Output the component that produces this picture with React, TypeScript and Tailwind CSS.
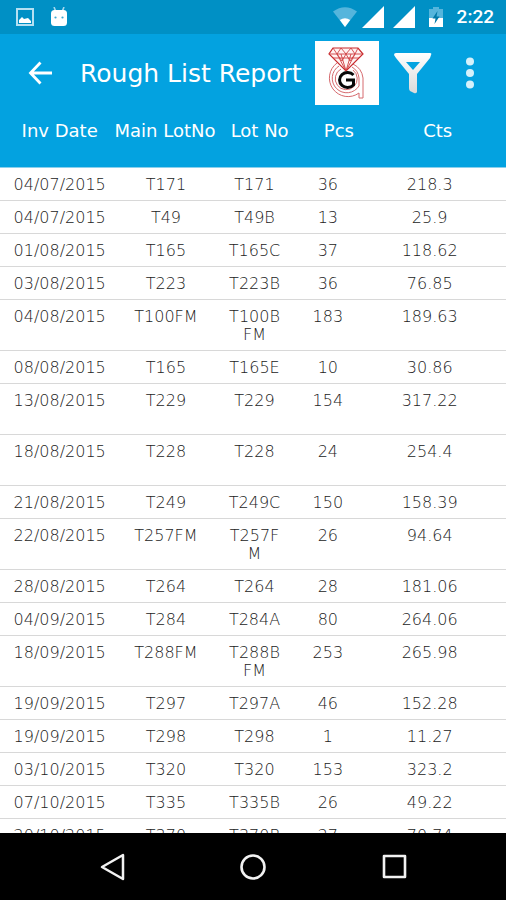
type Row = { date: string; main: string; lot: string[]; pcs: string; cts: string };

const rows: Row[] = [
  { date: "04/07/2015", main: "T171", lot: ["T171"], pcs: "36", cts: "218.3" },
  { date: "04/07/2015", main: "T49", lot: ["T49B"], pcs: "13", cts: "25.9" },
  { date: "01/08/2015", main: "T165", lot: ["T165C"], pcs: "37", cts: "118.62" },
  { date: "03/08/2015", main: "T223", lot: ["T223B"], pcs: "36", cts: "76.85" },
  { date: "04/08/2015", main: "T100FM", lot: ["T100B", "FM"], pcs: "183", cts: "189.63" },
  { date: "08/08/2015", main: "T165", lot: ["T165E"], pcs: "10", cts: "30.86" },
  { date: "13/08/2015", main: "T229", lot: ["T229", "\u00a0"], pcs: "154", cts: "317.22" },
  { date: "18/08/2015", main: "T228", lot: ["T228", "\u00a0"], pcs: "24", cts: "254.4" },
  { date: "21/08/2015", main: "T249", lot: ["T249C"], pcs: "150", cts: "158.39" },
  { date: "22/08/2015", main: "T257FM", lot: ["T257F", "M"], pcs: "26", cts: "94.64" },
  { date: "28/08/2015", main: "T264", lot: ["T264"], pcs: "28", cts: "181.06" },
  { date: "04/09/2015", main: "T284", lot: ["T284A"], pcs: "80", cts: "264.06" },
  { date: "18/09/2015", main: "T288FM", lot: ["T288B", "FM"], pcs: "253", cts: "265.98" },
  { date: "19/09/2015", main: "T297", lot: ["T297A"], pcs: "46", cts: "152.28" },
  { date: "19/09/2015", main: "T298", lot: ["T298"], pcs: "1", cts: "11.27" },
  { date: "03/10/2015", main: "T320", lot: ["T320"], pcs: "153", cts: "323.2" },
  { date: "07/10/2015", main: "T335", lot: ["T335B"], pcs: "26", cts: "49.22" },
  { date: "20/10/2015", main: "T370", lot: ["T370B"], pcs: "27", cts: "70.74" },
];

function Signal() {
  return (
    <svg width="22" height="22" viewBox="0 0 22 22" aria-hidden="true">
      <path d="M22 0V22H0Z" fill="#fff" />
    </svg>
  );
}

function StatusBar() {
  return (
    <div className="flex h-[34px] shrink-0 items-center justify-between bg-[#0090c5] pl-4 pr-3">
      <div className="flex items-center gap-4">
        <svg width="18" height="18" viewBox="0 0 18 18" aria-hidden="true">
          <rect x="1" y="1" width="16" height="16" fill="none" stroke="#b5e0f2" strokeWidth="2" />
          <path d="M3 15V12L6 9L8 11L12 10L15 13V15Z" fill="#fff" />
        </svg>
        <svg width="18" height="20" viewBox="0 0 18 20" aria-hidden="true">
          <path d="M4 0L6 5M14 0L12 5" stroke="#a5d8ee" strokeWidth="1.6" />
          <rect x="1" y="3" width="16" height="16" rx="3.5" fill="#fff" />
          <circle cx="5.500" cy="10.500" r="1.100" fill="#3aa8d2" />
          <circle cx="12.500" cy="10.500" r="1.100" fill="#3aa8d2" />
        </svg>
      </div>
      <div className="flex items-center">
        <svg className="mr-[5px]" width="24" height="20" viewBox="0 0 24 20" aria-hidden="true">
          <path d="M0 4.500Q12-4 24 4.500L12 20Z" fill="#55b5dc" />
          <path d="M6.800 13Q12 9.500 17.200 13L12 20Z" fill="#fff" />
        </svg>
        <div className="flex gap-[9px]">
          <Signal />
          <Signal />
        </div>
        <svg className="ml-[14px] mr-[14px]" width="14" height="20" viewBox="0 0 14 20" aria-hidden="true">
          <path d="M4 0H10V2H14V11H0V2H4Z" fill="#55b5dc" />
          <path d="M0 11H14V20H0Z" fill="#fff" />
          <path d="M8.500 4L3.500 11.500H6.500L5.500 17L10.500 9.500H7.500Z" fill="#0079a8" />
        </svg>
        <span className="font-['Roboto',sans-serif] text-[19px] leading-6 font-medium text-white">2:22</span>
      </div>
    </div>
  );
}

function Logo() {
  return (
    <svg className="shrink-0" width="64" height="64" viewBox="0 0 64 64" role="img" aria-label="Diamond company logo">
      <rect width="64" height="64" fill="#fff" />
      <g fill="none" stroke="#d66a6e" strokeWidth="1">
        <path d="M22 22A18 18 0 1 0 44 52V57H48V37A18 18 0 0 0 38 23" />
        <path d="M24 25A14.500 14.500 0 1 0 44 45V37A14.500 14.500 0 0 0 37 26" />
        <path d="M26 28A11 11 0 1 0 38 29" />
      </g>
      <path d="M18 7H43L48 13L31 30L14 13Z" fill="#fff3f2" stroke="#c8282c" strokeWidth="1.200" />
      <path d="M14 13H48M18 7L22 13L26 7L31 13L36 7L40 13L43 7M22 13L31 30L40 13M26 13L31 30L36 13M18 17H44M22 13L27 20L31 13L35 20L40 13" fill="none" stroke="#cf3f42" strokeWidth="0.900" />
      <path d="M38.500 34A8 7.500 0 1 0 38.500 44V39H31" fill="none" stroke="#080808" strokeWidth="3" />
    </svg>
  );
}

function AppBar() {
  return (
    <header className="flex h-[78px] shrink-0 items-center bg-[#03a2e0] pl-7 text-white">
      <button type="button" aria-label="Back">
        <svg width="24" height="24" viewBox="0 0 24 24" fill="none" stroke="#fff" strokeWidth="2.800" aria-hidden="true">
          <path d="M12.500 1.500L2.500 12L12.500 22.500M2.500 12H24" />
        </svg>
      </button>
      <h1 className="ml-7 min-w-0 flex-1 pt-0.5 text-[25px] leading-8 font-normal whitespace-nowrap">Rough List Report</h1>
      <Logo />
      <button type="button" aria-label="Filter" className="ml-[15px]">
        <svg width="38" height="42" viewBox="0 0 38 42" aria-hidden="true">
          <defs>
            <linearGradient id="funnel" x1="0" y1="0" x2="0" y2="1">
              <stop offset="0" stopColor="#fff" />
              <stop offset="1" stopColor="#dadada" />
            </linearGradient>
          </defs>
          <path fillRule="evenodd" fill="url(#funnel)" d="M2 1H36Q38 1 37 3L36 6L23 22V40Q22 42 20 41L16 39Q15 38 15 36V22L2 6L0 3Q0 1 2 1ZM12 10L19 18L26 10Z" />
        </svg>
      </button>
      <button type="button" aria-label="More options" className="mr-7 ml-[30px]">
        <svg width="16" height="32" viewBox="0 0 16 32" fill="#d5f1fb" aria-hidden="true">
          <circle cx="8" cy="4.500" r="4" />
          <circle cx="8" cy="16" r="4" />
          <circle cx="8" cy="27.500" r="4" />
        </svg>
      </button>
    </header>
  );
}

function ReportTable() {
  return (
    <table className="w-full table-fixed border-separate border-spacing-0 text-center">
      <colgroup>
        <col className="w-[22%]" />
        <col className="w-[22%]" />
        <col className="w-[13%]" />
        <col className="w-[16%]" />
        <col className="w-[27%]" />
      </colgroup>
      <thead className="text-lg leading-6 text-white">
        <tr className="bg-[#03a2e0] align-top whitespace-nowrap">
          <th scope="col" className="border-b border-[#8bd0ec] pt-[7px] pb-6 pl-2 font-normal">Inv Date</th>
          <th scope="col" className="border-b border-[#8bd0ec] pt-[7px] pb-6 pr-1 font-normal">Main LotNo</th>
          <th scope="col" className="border-b border-[#8bd0ec] pt-[7px] pb-6 pl-2 font-normal">Lot No</th>
          <th scope="col" className="border-b border-[#8bd0ec] pt-[7px] pb-6 pl-5 font-normal">Pcs</th>
          <th scope="col" className="border-b border-[#8bd0ec] pt-[7px] pb-6 font-normal">Cts</th>
        </tr>
      </thead>
      <tbody className="font-['DejaVu_Sans_Light','DejaVu_Sans',sans-serif] text-base leading-[18px] font-extralight text-[#222]">
        {rows.map((r, i) => (
          <tr key={i} className="align-top">
            <td className="border-b border-[#d8d8d8] pt-2 pb-1.5 pl-2">{r.date}</td>
            <td className="border-b border-[#d8d8d8] pt-2 pr-0.5 pb-1.5">{r.main}</td>
            <td className="border-b border-[#d8d8d8] pt-2 pr-0.5 pb-1.5">
              {r.lot.map((part, j) => (
                <span key={j} className="block">{part}</span>
              ))}
            </td>
            <td className="border-b border-[#d8d8d8] pt-2 pr-0.5 pb-1.5">{r.pcs}</td>
            <td className="border-b border-[#d8d8d8] pt-2 pr-4 pb-1.5">{r.cts}</td>
          </tr>
        ))}
      </tbody>
    </table>
  );
}

function NavBar() {
  return (
    <nav aria-label="System" className="flex h-[67px] shrink-0 items-center justify-center gap-[115px] bg-black">
      <button type="button" aria-label="Back">
        <svg width="26" height="28" viewBox="0 0 26 28" fill="none" stroke="#f2f2f2" strokeWidth="2.500" strokeLinejoin="round" aria-hidden="true">
          <path d="M24 2V26L3 14Z" />
        </svg>
      </button>
      <button type="button" aria-label="Home">
        <svg width="26" height="28" viewBox="0 0 26 28" fill="none" stroke="#f2f2f2" strokeWidth="2.600" aria-hidden="true">
          <circle cx="13" cy="14" r="11.500" />
        </svg>
      </button>
      <button type="button" aria-label="Recent apps">
        <svg width="26" height="28" viewBox="0 0 26 28" fill="none" stroke="#f2f2f2" strokeWidth="2.600" strokeLinejoin="round" aria-hidden="true">
          <rect x="3" y="3" width="21" height="21" />
        </svg>
      </button>
    </nav>
  );
}

export default function App() {
  return (
    <div className="flex h-screen flex-col overflow-hidden bg-white font-['DejaVu_Sans',sans-serif]">
      <StatusBar />
      <AppBar />
      <main className="min-h-0 flex-1 overflow-hidden">
        <ReportTable />
      </main>
      <NavBar />
    </div>
  );
}
